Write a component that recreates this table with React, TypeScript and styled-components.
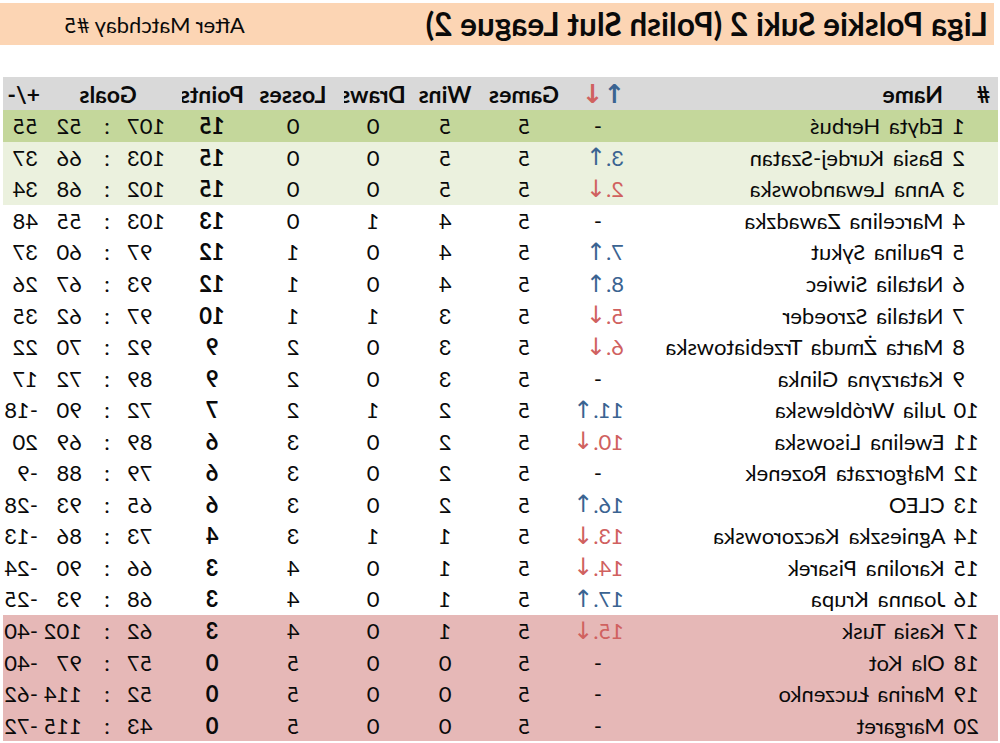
import React from "react";
import styled, { createGlobalStyle } from "styled-components";

const Global = createGlobalStyle`
  html, body { margin: 0; padding: 0; background: #ffffff; }
  body { font-family: Lato, "Open Sans", "DejaVu Sans", sans-serif; color: #0a0a0a; }
`;

type Row = {
  rank: number;
  name: string;
  change: string;
  dir: "up" | "down" | "none";
  games: number;
  wins: number;
  draws: number;
  losses: number;
  points: number;
  gf: number;
  ga: number;
  band: "top" | "promo" | "none" | "releg";
};

const rows: Row[] = [
  { rank: 1, name: "Edyta Herbuś", change: "-", dir: "none", games: 5, wins: 5, draws: 0, losses: 0, points: 15, gf: 107, ga: 52, band: "top" },
  { rank: 2, name: "Basia Kurdej-Szatan", change: "3.", dir: "up", games: 5, wins: 5, draws: 0, losses: 0, points: 15, gf: 103, ga: 66, band: "promo" },
  { rank: 3, name: "Anna Lewandowska", change: "2.", dir: "down", games: 5, wins: 5, draws: 0, losses: 0, points: 15, gf: 102, ga: 68, band: "promo" },
  { rank: 4, name: "Marcelina Zawadzka", change: "-", dir: "none", games: 5, wins: 4, draws: 1, losses: 0, points: 13, gf: 103, ga: 55, band: "none" },
  { rank: 5, name: "Paulina Sykut", change: "7.", dir: "up", games: 5, wins: 4, draws: 0, losses: 1, points: 12, gf: 97, ga: 60, band: "none" },
  { rank: 6, name: "Natalia Siwiec", change: "8.", dir: "up", games: 5, wins: 4, draws: 0, losses: 1, points: 12, gf: 93, ga: 67, band: "none" },
  { rank: 7, name: "Natalia Szroeder", change: "5.", dir: "down", games: 5, wins: 3, draws: 1, losses: 1, points: 10, gf: 97, ga: 62, band: "none" },
  { rank: 8, name: "Marta Żmuda Trzebiatowska", change: "6.", dir: "down", games: 5, wins: 3, draws: 0, losses: 2, points: 9, gf: 92, ga: 70, band: "none" },
  { rank: 9, name: "Katarzyna Glinka", change: "-", dir: "none", games: 5, wins: 3, draws: 0, losses: 2, points: 9, gf: 89, ga: 72, band: "none" },
  { rank: 10, name: "Julia Wróblewska", change: "11.", dir: "up", games: 5, wins: 2, draws: 1, losses: 2, points: 7, gf: 72, ga: 90, band: "none" },
  { rank: 11, name: "Ewelina Lisowska", change: "10.", dir: "down", games: 5, wins: 2, draws: 0, losses: 3, points: 6, gf: 89, ga: 69, band: "none" },
  { rank: 12, name: "Małgorzata Rozenek", change: "-", dir: "none", games: 5, wins: 2, draws: 0, losses: 3, points: 6, gf: 79, ga: 88, band: "none" },
  { rank: 13, name: "CLEO", change: "16.", dir: "up", games: 5, wins: 2, draws: 0, losses: 3, points: 6, gf: 65, ga: 93, band: "none" },
  { rank: 14, name: "Agnieszka Kaczorowska", change: "13.", dir: "down", games: 5, wins: 1, draws: 1, losses: 3, points: 4, gf: 73, ga: 86, band: "none" },
  { rank: 15, name: "Karolina Pisarek", change: "14.", dir: "down", games: 5, wins: 1, draws: 0, losses: 4, points: 3, gf: 66, ga: 90, band: "none" },
  { rank: 16, name: "Joanna Krupa", change: "17.", dir: "up", games: 5, wins: 1, draws: 0, losses: 4, points: 3, gf: 68, ga: 93, band: "none" },
  { rank: 17, name: "Kasia Tusk", change: "15.", dir: "down", games: 5, wins: 1, draws: 0, losses: 4, points: 3, gf: 62, ga: 102, band: "releg" },
  { rank: 18, name: "Ola Kot", change: "-", dir: "none", games: 5, wins: 0, draws: 0, losses: 5, points: 0, gf: 57, ga: 97, band: "releg" },
  { rank: 19, name: "Marina Łuczenko", change: "-", dir: "none", games: 5, wins: 0, draws: 0, losses: 5, points: 0, gf: 52, ga: 114, band: "releg" },
  { rank: 20, name: "Margaret", change: "-", dir: "none", games: 5, wins: 0, draws: 0, losses: 5, points: 0, gf: 43, ga: 115, band: "releg" },
];

const bandColor: Record<Row["band"], string> = {
  top: "#c4d79b",
  promo: "#ebf1de",
  none: "#ffffff",
  releg: "#e6b8b7",
};

const UP = "#3a6391";
const DOWN = "#d0615f";
const HEAD = "#d9d9d9";

/* The whole sheet is shown mirrored left-to-right, as in the reference. */
const Mirror = styled.div`
  width: 1000px;
  height: 743px;
  overflow: hidden;
  transform: scaleX(-1);
  padding-top: 3px;
  box-sizing: border-box;
`;

const TitleBar = styled.header`
  margin-left: 6px;
  height: 42px;
  background: #fcd5b4;
  display: flex;
  align-items: center;
  justify-content: space-between;
  padding: 0 64px 0 6px;
`;

const Title = styled.h1`
  margin: 0;
  font-family: Lato, "DejaVu Sans", sans-serif;
  font-weight: 700;
  font-size: 31.5px;
  color: #0a0a0a;
`;

const Subtitle = styled.span`
  font-size: 22px;
  color: #0a0a0a;
`;

const Table = styled.div`
  margin: 32px 0 0 2px;
  width: 995px;
  display: grid;
  grid-template-columns: 48px 320px 70px 72px 86px 58px 102px 60px 60px 30px 50px 39px;
  grid-template-rows: 33px;
  grid-auto-rows: 31.55px;
`;

const HeadRow = styled.div`
  display: contents;
`;

const BodyRow = styled.div`
  display: contents;
`;

type CellProps = {
  $align?: "left" | "center" | "right";
  $pl?: number;
  $pr?: number;
  $bold?: boolean;
  $span?: number;
  $bg: string;
};

const Cell = styled.div<CellProps>`
  background: ${(p) => p.$bg};
  display: flex;
  align-items: center;
  justify-content: ${(p) =>
    p.$align === "right" ? "flex-end" : p.$align === "center" ? "center" : "flex-start"};
  padding-left: ${(p) => p.$pl ?? 0}px;
  padding-right: ${(p) => p.$pr ?? 0}px;
  font-size: 22px;
  font-weight: ${(p) => (p.$bold ? 700 : 400)};
  color: #0a0a0a;
  white-space: nowrap;
  grid-column: ${(p) => (p.$span ? `span ${p.$span}` : "auto")};
  box-sizing: border-box;
`;

const HeadCell = styled(Cell)`
  font-weight: 700;
  font-size: 23px;
`;

const RankName = styled.span`
  word-spacing: 3px;
`;

const Arrow = styled.span<{ $color: string; $size: number; $bold?: boolean }>`
  font-family: "DejaVu Sans", sans-serif;
  font-weight: ${(p) => (p.$bold ? 700 : 400)};
  font-size: ${(p) => p.$size}px;
  line-height: 1;
  color: ${(p) => p.$color};
`;

const Change = styled.span<{ $color: string }>`
  color: ${(p) => p.$color};
`;

export default function App() {
  return (
    <>
      <Global />
      <Mirror>
        <TitleBar>
          <Title>Liga Polskie Suki 2 (Polish Slut League 2)</Title>
          <Subtitle>After Matchday #5</Subtitle>
        </TitleBar>
        <Table>
          <HeadRow>
            <HeadCell $bg={HEAD} $pl={8}>#</HeadCell>
            <HeadCell $bg={HEAD} $pl={7}>Name</HeadCell>
            <HeadCell $bg={HEAD} $pl={5}>
              <Arrow $color={UP} $size={26} $bold>↑</Arrow>
              <Arrow $color={DOWN} $size={26} $bold>↓</Arrow>
            </HeadCell>
            <HeadCell $bg={HEAD} $align="center">Games</HeadCell>
            <HeadCell $bg={HEAD} $align="center">Wins</HeadCell>
            <HeadCell $bg={HEAD} $align="center">Draws</HeadCell>
            <HeadCell $bg={HEAD} $align="center">Losses</HeadCell>
            <HeadCell $bg={HEAD} $align="center">Points</HeadCell>
            <HeadCell $bg={HEAD} $align="center" $span={3} $pl={8}>Goals</HeadCell>
            <HeadCell $bg={HEAD} $pl={2}>+/-</HeadCell>
          </HeadRow>
          {rows.map((r) => {
            const bg = bandColor[r.band];
            const col = r.dir === "up" ? UP : r.dir === "down" ? DOWN : "#0a0a0a";
            return (
              <BodyRow key={r.rank}>
                <Cell $bg={bg} $span={2} $pl={r.rank < 10 ? 33 : 19}>
                  <RankName>
                    {r.rank} {r.name}
                  </RankName>
                </Cell>
                <Cell $bg={bg} $pl={r.dir === "none" ? 28 : 6}>
                  {r.dir === "none" ? (
                    "-"
                  ) : (
                    <>
                      <Change $color={col}>{r.change}</Change>
                      <Arrow $color={col} $size={24}>
                        {r.dir === "up" ? "↑" : "↓"}
                      </Arrow>
                    </>
                  )}
                </Cell>
                <Cell $bg={bg} $align="center">{r.games}</Cell>
                <Cell $bg={bg} $align="center">{r.wins}</Cell>
                <Cell $bg={bg} $align="center">{r.draws}</Cell>
                <Cell $bg={bg} $align="center">{r.losses}</Cell>
                <Cell $bg={bg} $align="center" $bold>{r.points}</Cell>
                <Cell $bg={bg} $align="right" $pr={5}>{r.gf}</Cell>
                <Cell $bg={bg} $align="center">:</Cell>
                <Cell $bg={bg} $pl={10}>{r.ga}</Cell>
                <Cell $bg={bg} $pl={4}>{r.gf - r.ga}</Cell>
              </BodyRow>
            );
          })}
        </Table>
      </Mirror>
    </>
  );
}
